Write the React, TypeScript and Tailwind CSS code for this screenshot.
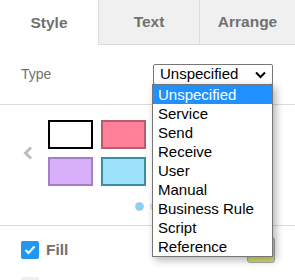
import React from 'react';

const options = [
  'Unspecified',
  'Service',
  'Send',
  'Receive',
  'User',
  'Manual',
  'Business Rule',
  'Script',
  'Reference',
];

const swatches = [
  { bg: 'bg-white', border: 'border-black' },
  { bg: 'bg-[#ff7f99]', border: 'border-[#b85c6e]' },
  { bg: 'bg-[#d8aff9]', border: 'border-[#a47cc7]' },
  { bg: 'bg-[#9ce1f9]', border: 'border-[#3b8ca9]' },
];

const App = () => {
  return (
    <div className="relative w-[295px] h-[280px] overflow-hidden bg-white font-['Liberation_Sans',Arial,sans-serif]">
      {/* Tabs */}
      <div className="flex h-[45px] text-[15.5px] font-bold text-[#707070]">
        <div className="w-[98px] flex items-center justify-center">Style</div>
        <div className="w-[101px] flex items-center justify-center bg-[#f0f0f0] border-l border-b border-[#dcdcdc]">
          Text
        </div>
        <div className="flex-1 flex items-center justify-center bg-[#f0f0f0] border-l border-b border-[#dcdcdc]">
          Arrange
        </div>
      </div>

      {/* Type row */}
      <div className="h-[60px] flex items-center justify-between pl-[21px] pr-[22px] border-b border-[#dcdcdc]">
        <span className="text-[14px] text-[#707070]">Type</span>
        <div className="w-[120px] h-[21px] border border-[#767676] rounded-[2px] flex items-center justify-between pl-[6px] pr-[6px] text-[15px] text-black">
          <span>Unspecified</span>
          <svg width="11" height="8" viewBox="0 0 11 8">
            <path d="M1 1.5 L5.5 6 L10 1.5" stroke="#000" strokeWidth="2" fill="none" />
          </svg>
        </div>
      </div>

      {/* Swatches */}
      <div className="h-[121px] border-b border-[#dcdcdc] pt-[15px] flex">
        <div className="w-[48px] flex items-start pl-[23px] pt-[26px]">
          <svg width="10" height="14" viewBox="0 0 10 14">
            <path d="M8 1.5 L2.5 7 L8 12.5" stroke="#bdbdbd" strokeWidth="3" fill="none" />
          </svg>
        </div>
        <div className="flex flex-col items-start">
          <div className="grid grid-cols-2 gap-[8px]">
            {swatches.map((s, i) => (
              <div key={i} className={`w-[45px] h-[29px] border-2 ${s.bg} ${s.border}`} />
            ))}
          </div>
          <div className="flex gap-[6px] mt-[16px] ml-[87px]">
            <div className="w-[9px] h-[9px] rounded-full bg-[#80d2fd] border border-[#b8c8d0]" />
            <div className="w-[9px] h-[9px] rounded-full bg-[#dddddd]" />
          </div>
        </div>
      </div>

      {/* Fill rows */}
      <div className="pt-[6px] pl-[21px] pr-[20px]">
        <div className="h-[36px] flex items-center">
          <div className="w-[18px] h-[18px] rounded-[2px] bg-[#2196f3] flex items-center justify-center">
            <svg width="12" height="10" viewBox="0 0 12 10">
              <path d="M1.5 5 L4.5 8 L10.5 1.5" stroke="#fff" strokeWidth="2.2" fill="none" />
            </svg>
          </div>
          <span className="ml-[7px] text-[15.5px] font-bold text-[#707070]">Fill</span>
          <div className="ml-auto w-[28px] h-[26px] rounded-[3px] border border-[#a8a8a8] bg-[#d6dd6c]" />
        </div>
        <div className="h-[36px] flex items-start pt-[9px]">
          <div className="w-[18px] h-[18px] rounded-[2px] bg-[#eeeeee]" />
        </div>
      </div>

      {/* Open dropdown list */}
      <div className="absolute left-[152px] top-[84px] w-[121px] border border-[#767676] bg-white shadow-[3px_3px_8px_rgba(0,0,0,0.3)]">
        {options.map((o, i) => (
          <div
            key={o}
            className={`h-[19px] leading-[19px] pl-[5px] text-[15px] ${
              i === 0 ? 'bg-[#1e90ff] text-white' : 'text-black'
            }`}
          >
            {o}
          </div>
        ))}
      </div>
    </div>
  );
};

export default App;
